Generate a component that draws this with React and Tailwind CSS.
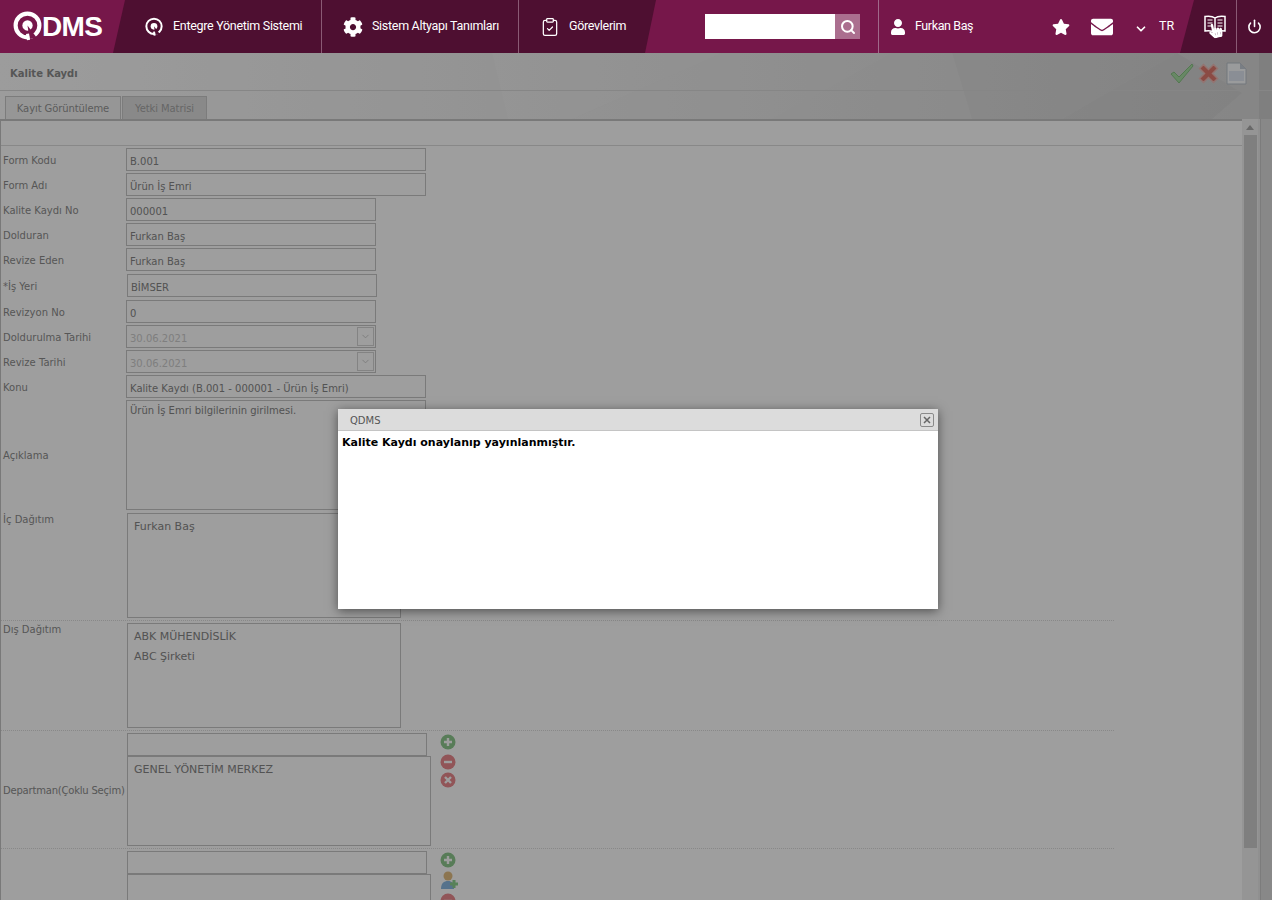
import { Search, Power, ClipboardCheck, ChevronDown } from 'lucide-react';
import { FaStar, FaUser, FaCog, FaEnvelope, FaHandPointer } from 'react-icons/fa';

const QMark = ({ size = 30, stroke = 4, bg = '#76174a' }) => (
  <svg width={size} height={size} viewBox="0 0 30 30" fill="none">
    <circle cx="15" cy="14" r="11.5" stroke="#fff" strokeWidth={stroke} />
    <circle cx="15" cy="14" r="5" fill="#fff" />
    <path d="M15 14 L17 27 L24 26" fill={bg} />
    <path d="M15 22 L16 28" stroke="#fff" strokeWidth="3" />
  </svg>
);

const NavItem = ({ icon, label, className }) => (
  <div className={`flex items-center gap-[9px] h-full ${className}`}>
    {icon}
    <span className="text-[12.5px] text-white tracking-[-0.3px]">{label}</span>
  </div>
);

const Field = ({ value, className, muted, select }) => (
  <div className={`relative h-[23px] border border-[#c6c6c6] pl-[3px] pt-[6px] text-[10px] leading-[14px] ${muted ? 'text-[#cdcdcd]' : 'text-[#868686]'} ${className}`}>
    {value}
    {select && (
      <span className="absolute right-[1px] top-[1px] w-[17px] h-[19px] border border-[#d4d4d4] flex items-center justify-center">
        <ChevronDown size={11} className="text-[#c8c8c8]" />
      </span>
    )}
  </div>
);

const Row = ({ label, className = 'mt-[2px]', children }) => (
  <div className={`flex items-center ${className}`}>
    <span className="w-[125px] shrink-0 pl-[2px] pt-[1px] text-[10px] text-[#8c8c8c]">{label}</span>
    {children}
  </div>
);

const ListBox = ({ items, className }) => (
  <div className={`border border-[#c6c6c6] pl-[6px] pt-[3px] text-[11px] leading-[20px] text-[#868686] ${className}`}>
    {items.map((i) => <div key={i}>{i}</div>)}
  </div>
);

const RoundIcon = ({ color, kind, className = '' }) => (
  <svg width="16" height="16" viewBox="0 0 16 16" className={className}>
    <circle cx="8" cy="8" r="7.5" fill={color} />
    {kind === 'plus' && <path d="M8 4v8M4 8h8" stroke="#fff" strokeWidth="2.4" />}
    {kind === 'minus' && <path d="M4 8h8" stroke="#fff" strokeWidth="2.4" />}
    {kind === 'x' && <path d="M5 5l6 6M11 5l-6 6" stroke="#fff" strokeWidth="2.4" />}
  </svg>
);

export default function App() {
  return (
    <div className="relative h-[900px] overflow-hidden bg-[#e8e8e8] font-['DejaVu_Sans',sans-serif]">
      {/* Top bar */}
      <header className="relative z-20 flex h-[53px] bg-[#76174a] font-['Roboto',sans-serif]">
        <div className="w-[113px] shrink-0 flex items-center pl-[12px]">
          <QMark size={31} />
          <span className="-ml-[1px] text-[28px] text-white font-['Liberation_Sans',sans-serif] font-bold tracking-[-0.6px]">DMS</span>
        </div>
        <nav className="flex w-[543px] shrink-0 bg-[#4e0f31] [clip-path:polygon(12px_0,100%_0,calc(100%-11px)_100%,0_100%)]">
          <NavItem
            className="w-[209px] pl-[31px] border-r border-[#8a5a74]"
            icon={<QMark size={20} stroke={3} bg="#4e0f31" />}
            label="Entegre Yönetim Sistemi"
          />
          <NavItem
            className="w-[197px] pl-[21px] border-r border-[#8a5a74]"
            icon={<FaCog size={20} color="#fff" />}
            label="Sistem Altyapı Tanımları"
          />
          <NavItem
            className="pl-[21px]"
            icon={<ClipboardCheck size={20} color="#fff" strokeWidth={1.5} />}
            label="Görevlerim"
          />
        </nav>
        <div className="ml-[49px] mt-[14px] flex h-[25px]">
          <div className="w-[130px] bg-white" />
          <div className="w-[25px] bg-[#ab6f8f] flex items-center justify-center">
            <Search size={16} color="#fff" strokeWidth={3} />
          </div>
        </div>
        <div className="ml-[18px] w-[303px] shrink-0 flex items-center border-l border-[#a0698a] pl-[11px]">
          <FaUser size={16} color="#fff" />
          <span className="ml-[9px] text-[12.5px] tracking-[-0.4px] text-white">Furkan Baş</span>
          <FaStar size={18} color="#fff" className="ml-[79px]" />
          <FaEnvelope size={22} color="#fff" className="ml-[21px]" />
          <ChevronDown size={14} color="#fff" strokeWidth={3} className="ml-[21px] mt-[4px]" />
          <span className="ml-[11px] text-[12.5px] text-white">TR</span>
        </div>
        <div className="flex-1 flex bg-[#4e0f31] [clip-path:polygon(14px_0,100%_0,100%_100%,0_100%)] -ml-[1px]">
          <div className="w-[57px] flex items-center justify-center pl-[14px] pb-[4px] border-r border-[#8a5a74] relative">
            <svg width="22" height="19" viewBox="0 0 22 19" fill="none" stroke="#fff" strokeWidth="1.5">
              <path d="M11 3C9 1.500 5 1 1 1.500V16c4-.5 8 0 10 1.500 2-1.500 6-2 10-1.500V1.500C17 1 13 1.500 11 3zM11 3v14" />
              <path d="M3.500 5h5M3.500 8h5M3.500 11h5M13.500 5h5M13.500 8h5M13.500 11h5" strokeWidth="1.200" />
            </svg>
            <FaHandPointer size={15} color="#fff" className="absolute left-[28px] top-[23px] -rotate-12" />
          </div>
          <div className="flex-1 flex items-center justify-center">
            <Power size={15} color="#fff" strokeWidth={2.5} />
          </div>
        </div>
      </header>

      {/* Page title band with faint polygon background */}
      <div className="relative h-[66px] bg-linear-to-r from-[#fcfcfc] to-[#d8d8d8]">
        <svg className="absolute right-0 top-0" width="800" height="66" viewBox="0 0 800 66">
          <path d="M20 0L36 66H100L250 0z" fill="#ffffff" opacity="0.12" />
          <path d="M250 0L100 66H300L420 0z" fill="#ffffff" opacity="0.05" />
          <path d="M480 0L500 66H590L705 0z" fill="#000000" opacity="0.02" />
          <path d="M705 0L590 66H740L770 40z" fill="#000000" opacity="0.03" />
          <path d="M787 0V66H800V0z" fill="#000000" opacity="0.05" />
        </svg>
        <div className="relative flex items-center h-[38px] border-b border-[#d8d8d8] pl-[10px] pt-[3px]">
          <span className="text-[10px] font-bold text-[#8c8c8c]">Kalite Kaydı</span>
          <div className="ml-auto mr-[25px] flex items-center gap-[4px]">
            <svg width="24" height="21" viewBox="0 0 24 21">
              <path d="M1 11l3-2 5 5L22 1l1 2L9 20z" fill="#a8dca4" stroke="#86c282" />
            </svg>
            <svg width="21" height="21" viewBox="0 0 21 21">
              <path d="M1.500 5.500l4-4 5 5 5-5 4 4-5 5 5 5-4 4-5-5-5 5-4-4 5-5z" fill="#e07a6e" stroke="#eebcb6" strokeWidth="1.500" />
            </svg>
            <svg width="21" height="23" viewBox="0 0 21 23" className="ml-[3px]">
              <path d="M1 1h13l6 6v15H1z" fill="#f8fafc" stroke="#b8c0c9" />
              <path d="M14 1v6h6z" fill="#c3ccd6" />
              <path d="M3 9h15v10H3z" fill="#dfe6f0" />
            </svg>
          </div>
        </div>
        <div className="relative flex gap-[1px] pl-[5px] pt-[5px]">
          <div className="h-[23px] w-[116px] border border-[#c8c8c8] border-b-0 bg-[#f3f3f3] text-center text-[10px] leading-[23px] tracking-[-0.1px] text-[#959595]">Kayıt Görüntüleme</div>
          <div className="h-[23px] w-[85px] border border-[#c8c8c8] border-b-0 bg-[#dedede] text-center text-[10px] leading-[23px] tracking-[-0.1px] text-[#a5a5a5]">Yetki Matrisi</div>
        </div>
      </div>

      {/* Record form */}
      <div className="flex">
        <div className="w-[1242px] shrink-0 border-t-2 border-l border-[#c4c4c4] bg-white">
          <div className="h-[25px] border-b border-[#dcdcdc]" />
          <div className="pt-[1px]">
            <Row label="Form Kodu" className="mt-[1px]"><Field value="B.001" className="w-[300px]" /></Row>
            <Row label="Form Adı"><Field value="Ürün İş Emri" className="w-[300px]" /></Row>
            <Row label="Kalite Kaydı No"><Field value="000001" className="w-[250px]" /></Row>
            <Row label="Dolduran"><Field value="Furkan Baş" className="w-[250px]" /></Row>
            <Row label="Revize Eden"><Field value="Furkan Baş" className="w-[250px]" /></Row>
            <Row label="*İş Yeri" className="mt-[3px]"><Field value="BİMSER" className="ml-[1px] w-[250px]" /></Row>
            <Row label="Revizyon No" className="mt-[3px]"><Field value="0" className="w-[250px]" /></Row>
            <Row label="Doldurulma Tarihi"><Field value="30.06.2021" muted select className="w-[250px]" /></Row>
            <Row label="Revize Tarihi"><Field value="30.06.2021" muted select className="w-[250px]" /></Row>
            <Row label="Konu"><Field value="Kalite Kaydı (B.001 - 000001 - Ürün İş Emri)" className="w-[300px]" /></Row>
            <Row label="Açıklama">
              <div className="h-[110px] w-[300px] border border-[#c6c6c6] pl-[3px] pt-[1px] text-[10px] leading-[18px] text-[#868686]">Ürün İş Emri bilgilerinin girilmesi.</div>
            </Row>
            <div className="mt-[3px] flex w-[1113px] border-b border-dotted border-[#dcdcdc] pb-[2px]">
              <span className="-mt-[1px] w-[126px] shrink-0 pl-[2px] text-[10px] text-[#8c8c8c]">İç Dağıtım</span>
              <ListBox items={['Furkan Baş']} className="h-[105px] w-[274px]" />
            </div>
            <div className="mt-[2px] flex w-[1113px] border-b border-dotted border-[#dcdcdc] pb-[2px]">
              <span className="-mt-[1px] w-[126px] shrink-0 pl-[2px] text-[10px] text-[#8c8c8c]">Dış Dağıtım</span>
              <ListBox items={['ABK MÜHENDİSLİK', 'ABC Şirketi']} className="h-[105px] w-[274px]" />
            </div>
            <div className="mt-[2px] flex w-[1113px] items-start border-b border-dotted border-[#dcdcdc] pb-[2px]">
              <span className="w-[126px] shrink-0 whitespace-nowrap pl-[2px] pt-[50px] text-[10px] tracking-[-0.2px] text-[#8c8c8c]">Departman(Çoklu Seçim)</span>
              <div>
                <div className="h-[23px] w-[300px] border border-[#c6c6c6]" />
                <ListBox items={['GENEL YÖNETİM MERKEZ']} className="h-[90px] w-[304px]" />
              </div>
              <div className="ml-[9px] flex flex-col pt-[1px]">
                <RoundIcon color="#8fc98f" kind="plus" />
                <RoundIcon color="#ea8a8e" kind="minus" className="mt-[4px]" />
                <RoundIcon color="#ea8a8e" kind="x" className="mt-[2px]" />
              </div>
            </div>
            <div className="mt-[2px] flex w-[1113px] items-start">
              <span className="w-[126px] shrink-0" />
              <div>
                <div className="h-[23px] w-[300px] border border-[#c6c6c6]" />
                <ListBox items={[]} className="h-[90px] w-[304px]" />
              </div>
              <div className="ml-[9px] flex flex-col pt-[1px]">
                <RoundIcon color="#8fc98f" kind="plus" />
                <svg width="20" height="20" viewBox="0 0 20 20" className="mt-[3px]">
                  <circle cx="8" cy="5" r="4.500" fill="#e2bd82" />
                  <path d="M1 18c0-6 3-8 7-8s6 2 6 8z" fill="#8cb8e2" />
                  <path d="M14 9v8M10 13h8" stroke="#8fd08f" strokeWidth="3" />
                </svg>
                <RoundIcon color="#ea8a8e" kind="minus" className="mt-[2px]" />
              </div>
            </div>
          </div>
        </div>
        {/* Scrollbar */}
        <div className="w-[16px] shrink-0 bg-[#f0f0f0]">
          <div className="h-[16px] flex items-center justify-center">
            <span className="h-0 w-0 border-x-[4px] border-b-[5px] border-x-transparent border-b-[#a8a8a8]" />
          </div>
          <div className="mx-auto h-[713px] w-[13px] bg-[#cdcdcd]" />
        </div>
        <div className="ml-[2px] flex-1 border-l border-[#c8c8c8] bg-[#dcdcdc]" />
      </div>

      {/* Modal backdrop and dialog */}
      <div className="absolute inset-x-0 top-[53px] bottom-0 z-10 bg-black/[0.38]" />
      <div className="absolute left-[338px] top-[409px] z-30 h-[200px] w-[600px] bg-white shadow-[0_2px_10px_rgba(0,0,0,0.5)]">
        <div className="flex h-[22px] items-center justify-between border-b border-[#c4c4c4] bg-[#dcdcdc] pl-[12px] pr-[4px]">
          <span className="pt-[1px] text-[10px] text-[#555555]">QDMS</span>
          <span className="flex h-[14px] w-[14px] items-center justify-center rounded-[2px] border border-[#8a8a8a] text-[#666666]">
            <svg width="8" height="8" viewBox="0 0 8 8"><path d="M1 1l6 6M7 1L1 7" stroke="currentColor" strokeWidth="1.500" /></svg>
          </span>
        </div>
        <p className="pl-[4px] pt-[5px] text-[11px] font-bold leading-[14px] text-black">Kalite Kaydı onaylanıp yayınlanmıştır.</p>
      </div>
    </div>
  );
}
